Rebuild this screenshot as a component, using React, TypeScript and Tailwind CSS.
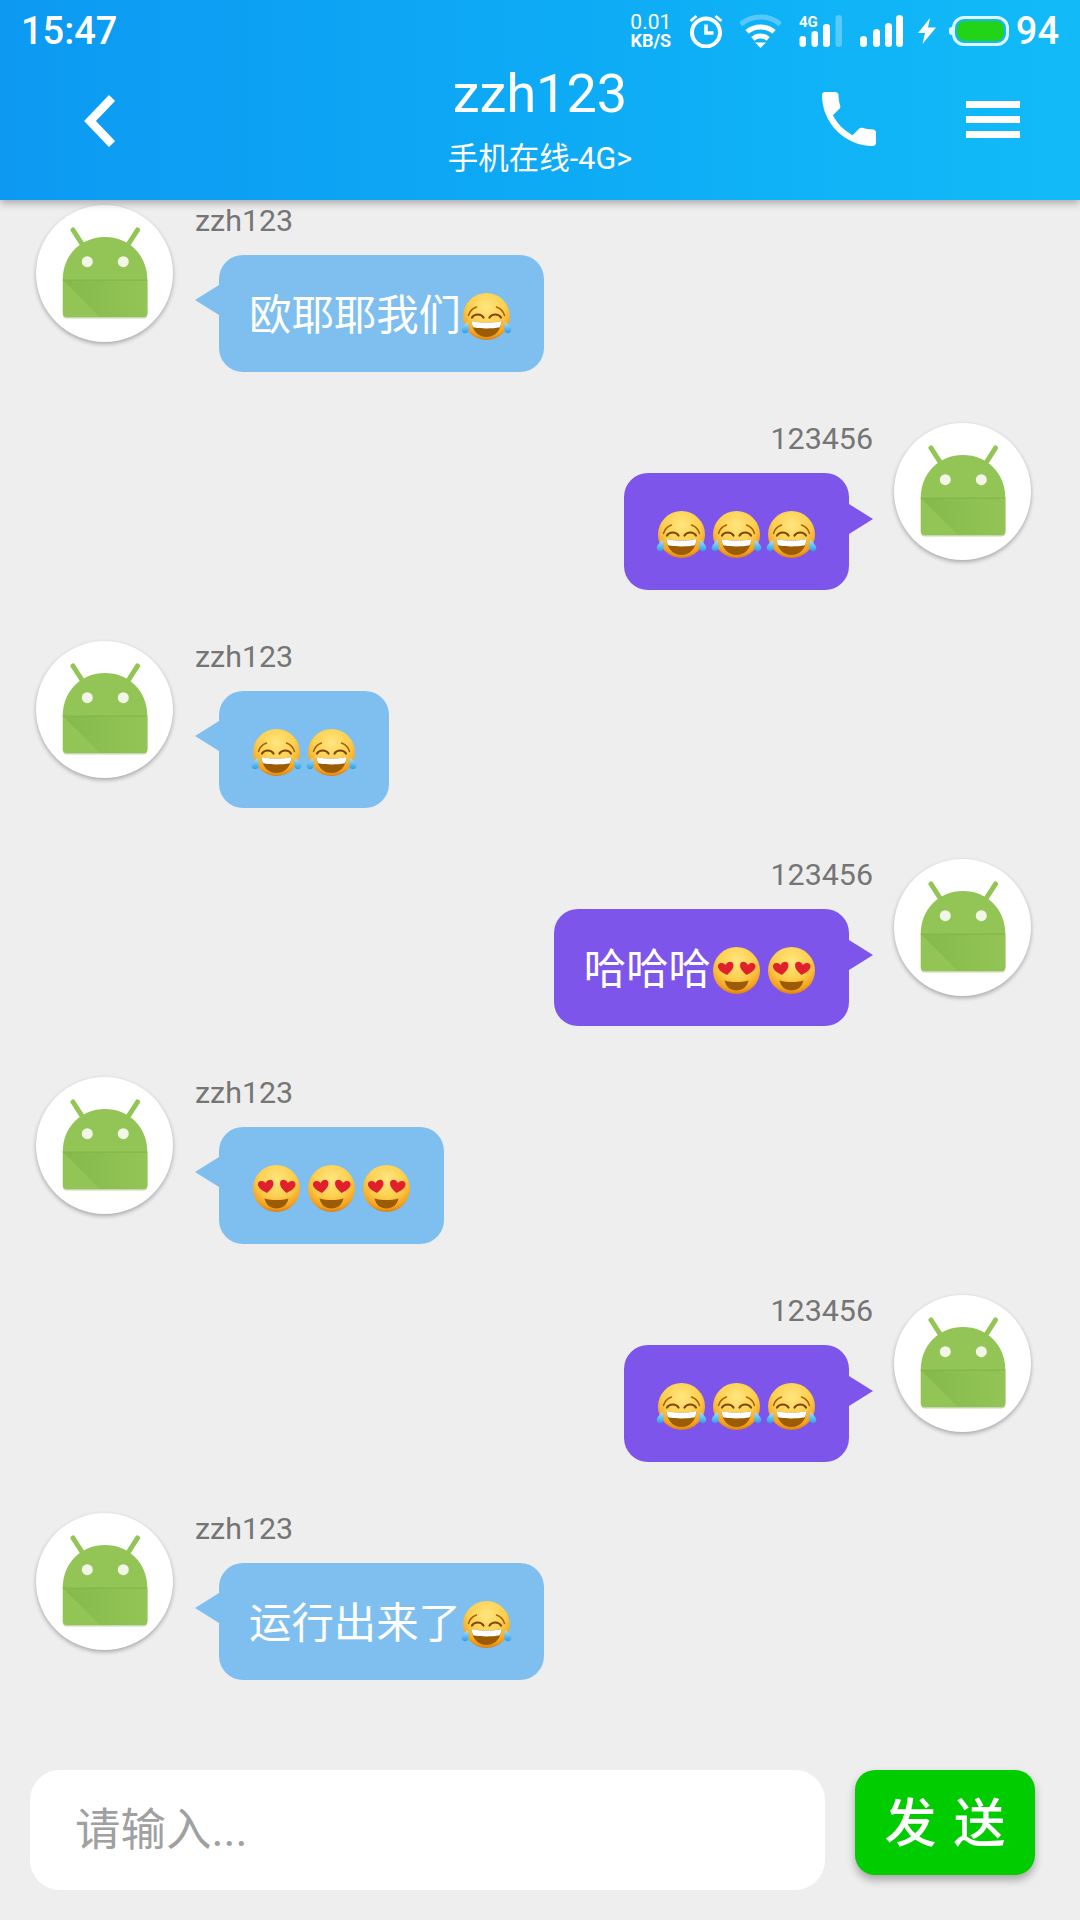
type Emoji = "joy" | "love"

type Message = {
  from: "left" | "right"
  name: string
  text?: string
  emoji: Emoji[]
}

const messages: Message[] = [
  { from: "left", name: "zzh123", text: "欧耶耶我们", emoji: ["joy"] },
  { from: "right", name: "123456", emoji: ["joy", "joy", "joy"] },
  { from: "left", name: "zzh123", emoji: ["joy", "joy"] },
  { from: "right", name: "123456", text: "哈哈哈", emoji: ["love", "love"] },
  { from: "left", name: "zzh123", emoji: ["love", "love", "love"] },
  { from: "right", name: "123456", emoji: ["joy", "joy", "joy"] },
  { from: "left", name: "zzh123", text: "运行出来了", emoji: ["joy"] },
]

const Heart = ({ x, y, rotate }: { x: number; y: number; rotate: number }) => (
  <path
    transform={`translate(${x} ${y}) rotate(${rotate})`}
    d="M0 7C-3 4.800-7.800 2-7.800-2.300-7.800-6-2.800-7 0-3 2.800-7 7.800-6 7.800-2.300 7.800 2 3 4.800 0 7Z"
    fill="#e0202c"
  />
)

const FaceDefs = () => (
  <defs>
    <radialGradient id="face" cx="50%" cy="30%" r="70%">
      <stop offset="0%" stopColor="#ffe680" />
      <stop offset="55%" stopColor="#fdcf4e" />
      <stop offset="88%" stopColor="#f4a21f" />
      <stop offset="100%" stopColor="#d97f14" />
    </radialGradient>
    <linearGradient id="tear" x1="0" y1="0" x2="0" y2="1">
      <stop offset="0%" stopColor="#a6e3ff" />
      <stop offset="100%" stopColor="#2a9fe8" />
    </linearGradient>
  </defs>
)

const JoyEmoji = () => (
  <svg viewBox="0.500 0.500 51 51" className="h-[51px] w-[51px] shrink-0 overflow-visible">
    <FaceDefs />
    <circle cx="26" cy="26" r="23.500" fill="url(#face)" />
    <path d="M8 25C9 21 12 18 16 16.500M44 25C43 21 40 18 36 16.500" fill="none" stroke="#a5610f" strokeWidth="1.500" strokeLinecap="round" />
    <path d="M11.500 27C14 23 20.500 23 23 27M29 27C31.500 23 38 23 40.500 27" fill="none" stroke="#7d4508" strokeWidth="2.200" strokeLinecap="round" />
    <path d="M11 30.500C20 32.500 32 32.500 41 30.500 40.500 40 34.500 46.500 26 46.500 17.500 46.500 11.500 40 11 30.500Z" fill="#9c5c05" />
    <path d="M11 30.500C20 32.500 32 32.500 41 30.500 40.800 32.800 40.300 34.800 39.400 36.700 31.500 38.300 20.500 38.300 12.600 36.700 11.700 34.800 11.200 32.800 11 30.500Z" fill="#fff" />
    <path d="M7 31.500C5 33.500 1.200 36.500 1.200 39.500 1.200 42.300 4.500 43.500 6.800 42 9 40.500 8.500 35 7 31.500Z" fill="url(#tear)" />
    <path d="M45 31.500C47 33.500 50.800 36.500 50.800 39.500 50.800 42.300 47.500 43.500 45.200 42 43 40.500 43.500 35 45 31.500Z" fill="url(#tear)" />
  </svg>
)

const LoveEmoji = () => (
  <svg viewBox="0.500 0.500 51 51" className="h-[51px] w-[51px] shrink-0 overflow-visible">
    <FaceDefs />
    <circle cx="26" cy="26" r="23.500" fill="url(#face)" />
    <Heart x={15.500} y={23.500} rotate={-8} />
    <Heart x={37} y={23.500} rotate={8} />
    <path d="M14 36C21.500 38 30.500 38 38 36 36.500 42.500 32 46 26 46 20 46 15.500 42.500 14 36Z" fill="#9c5c05" />
  </svg>
)

const AndroidAvatar = () => (
  <div className="h-[137px] w-[137px] shrink-0 rounded-full bg-white shadow-[0_2px_4px_rgba(0,0,0,0.3)]">
    <svg viewBox="0 0 137 137" className="h-full w-full">
      <defs>
        <linearGradient id="fold" x1="0" y1="0" x2="1" y2="0">
          <stop offset="0%" stopColor="#85b94b" />
          <stop offset="100%" stopColor="#93c556" />
        </linearGradient>
      </defs>
      <path d="M37 25L46 39M101.500 25L92.500 39" stroke="#93c556" strokeWidth="5" strokeLinecap="round" />
      <path d="M27 77V110C27 112.500 28.500 113.500 30.500 113.500H107.500C109.500 113.500 111.300 112.500 111.300 110V77Z" fill="#7ea648" fillOpacity="0.45" />
      <path d="M26.700 75C26.700 50 45 32 69 32S111.300 50 111.300 75V108.500C111.300 110.500 109.500 112 107.500 112H30.500C28.500 112 26.700 110.500 26.700 108.500Z" fill="#93c556" />
      <path d="M26.700 75H111.300V108.500C111.300 110.500 109.500 112 107.500 112H64Z" fill="url(#fold)" />
      <rect x="26.700" y="74.500" width="84.600" height="1.200" fill="#83b549" />
      <circle cx="51.300" cy="56.700" r="5.500" fill="#f1f6e6" />
      <circle cx="87.300" cy="56.700" r="5.500" fill="#f1f6e6" />
    </svg>
  </div>
)

const ChatRow = ({ message }: { message: Message }) => {
  const isLeft = message.from === "left"
  return (
    <div className={`flex h-[218px] items-start gap-[22px] ${isLeft ? "pl-[36px]" : "flex-row-reverse pr-[49px]"}`}>
      <AndroidAvatar />
      <div className={`flex flex-col ${isLeft ? "items-start" : "items-end -mr-[1px]"}`}>
        <p className="h-[50px] text-[30.400px] leading-[31px] text-[#757575]">{message.name}</p>
        <div className={`flex items-start ${isLeft ? "" : "flex-row-reverse"}`}>
          {isLeft ? (
            <div className="mt-[30px] h-0 w-0 border-y-[15px] border-r-[24px] border-y-transparent border-r-[#7fbfef]" />
          ) : (
            <div className="mt-[31px] h-0 w-0 border-y-[15px] border-l-[24px] border-y-transparent border-l-[#7e55eb]" />
          )}
          <div
            className={`flex h-[117px] items-center rounded-[24px] px-[32px] pt-[5px] text-[42.400px] leading-none text-white ${
              isLeft ? "bg-[#7fbfef]" : "bg-[#7e55eb]"
            }`}
          >
            {message.text && <span className="-ml-[2px]">{message.text}</span>}
            <div className="flex gap-[4px]">
              {message.emoji.map((e, i) => (e === "joy" ? <JoyEmoji key={i} /> : <LoveEmoji key={i} />))}
            </div>
          </div>
        </div>
      </div>
    </div>
  )
}

const StatusBar = () => (
  <div className="flex h-[60px] items-center justify-between px-[21px] pt-[1px] text-white">
    <span className="text-[38px] leading-none font-medium">15:47</span>
    <div className="flex items-center">
      {/* network speed */}
      <div className="flex w-[42px] flex-col items-center pl-[2px]">
        <span className="text-[21px] leading-[20px]">0.01</span>
        <span className="text-[18px] leading-[18px] font-bold">KB/S</span>
      </div>
      {/* alarm */}
      <svg viewBox="0 0 34 34" className="ml-[18px] h-[34px] w-[34px]" fill="none" stroke="white">
        <circle cx="17" cy="18.500" r="14" strokeWidth="4" />
        <path d="M17 10.500V19H24.500" strokeWidth="3.500" />
        <path d="M1.500 7L7.500 2M32.500 7L26.500 2" strokeWidth="2.800" />
      </svg>
      {/* wifi */}
      <svg viewBox="0 0 41 34" className="ml-[17px] h-[34px] w-[41px]" fill="none" stroke="white">
        <path d="M0.600 10.300A31 31 0 0 1 40.400 10.300" strokeWidth="5" strokeOpacity="0.3" />
        <path d="M7 17.900A21 21 0 0 1 34 17.900" strokeWidth="5" />
        <path d="M12.800 24.800A12 12 0 0 1 28.200 24.800" strokeWidth="5" />
        <polygon points="20.500,34 15,28.500 26,28.500" fill="white" stroke="none" />
      </svg>
      {/* sim 1 */}
      <svg viewBox="0 0 43 32" className="ml-[18px] h-[32px] w-[43px]">
        <text x="0" y="12" fontSize="15" fontWeight="700" fill="white" fontFamily="Roboto">4G</text>
        <rect x="0.500" y="21" width="6.500" height="11" rx="3.200" fill="white" />
        <rect x="12.500" y="16" width="6.500" height="16" rx="3.200" fill="white" />
        <rect x="24" y="9" width="7" height="23" rx="3.200" fill="white" />
        <rect x="36.500" y="0" width="6.500" height="32" rx="3.200" fill="white" fillOpacity="0.3" />
      </svg>
      {/* sim 2 */}
      <svg viewBox="0 0 43 32" className="ml-[18px] h-[32px] w-[43px]">
        <rect x="0" y="21" width="7" height="11" rx="3.500" fill="white" />
        <rect x="13" y="14" width="7" height="18" rx="3.500" fill="white" />
        <rect x="25" y="8" width="7" height="24" rx="3.500" fill="white" />
        <rect x="36" y="0" width="7" height="32" rx="3.500" fill="white" />
      </svg>
      {/* charging */}
      <svg viewBox="0 0 18 26" className="ml-[15px] h-[26px] w-[18px]" fill="white">
        <polygon points="12,0 0,15 7,15 4.500,26 18,9.500 10,9.500" />
      </svg>
      {/* battery */}
      <div className="ml-[13px] flex items-center">
        <div className="h-[8px] w-[3px] rounded-l-full bg-white/90" />
        <div className="h-[30px] w-[57px] rounded-[12px] border-[3px] border-[#dff7ff] p-[2px]">
          <div className="h-full w-full rounded-[8px] bg-[#22d317]" />
        </div>
      </div>
      <span className="ml-[7px] text-[38px] leading-none font-medium">94</span>
    </div>
  </div>
)

const Toolbar = () => (
  <div className="grid h-[140px] grid-cols-[1fr_auto_1fr] text-white">
    <div className="pt-[35px] pl-[84px]">
      <svg viewBox="0 0 31 52" className="h-[52px] w-[31px]" fill="none" stroke="white" strokeWidth="8.500">
        <path d="M28 3L6 26L28 49" />
      </svg>
    </div>
    <div className="flex flex-col items-center">
      <p className="mt-[3px] h-[62px] text-[54px] leading-[62px]">zzh123</p>
      <p className="mt-[14px] text-[30.500px] leading-[40px]">手机在线-4G&gt;</p>
    </div>
    <div className="flex items-start justify-end pt-[32px] pr-[60px]">
      <svg viewBox="3 3 18 18" className="h-[54px] w-[54px]" fill="white">
        <path d="M6.620 10.790c1.440 2.830 3.760 5.140 6.590 6.590l2.200-2.200c.270-.270.670-.360 1.020-.240 1.120.370 2.330.570 3.570.570.550 0 1 .450 1 1V20c0 .550-.450 1-1 1-9.390 0-17-7.610-17-17 0-.550.450-1 1-1h3.500c.550 0 1 .450 1 1 0 1.250.200 2.450.570 3.570.110.350.030.740-.250 1.020l-2.200 2.200z" />
      </svg>
      <div className="ml-[90px] flex flex-col gap-[8px] pt-[9px]">
        <div className="h-[7px] w-[54px] bg-white" />
        <div className="h-[7px] w-[54px] bg-white" />
        <div className="h-[7px] w-[54px] bg-white" />
      </div>
    </div>
  </div>
)

export default function App() {
  return (
    <div className="flex h-[1920px] w-[1080px] flex-col overflow-hidden bg-[#eeeeee] font-[Roboto,'Noto_Sans_CJK_SC',sans-serif]">
      <header className="relative z-10 h-[200px] bg-gradient-to-r from-[#0d99f2] to-[#12bbf8] shadow-[0_3px_8px_rgba(0,0,0,0.3)]">
        <StatusBar />
        <Toolbar />
      </header>

      <main className="flex-1 overflow-hidden pt-[5px]">
        {messages.map((m, i) => (
          <ChatRow key={i} message={m} />
        ))}
      </main>

      <footer className="flex h-[150px] items-start pl-[30px]">
        <div className="flex h-[120px] w-[795px] items-center rounded-[30px] bg-white pt-[2px] pl-[45px] text-[45.500px] text-[#a0a0a0]">
          请输入...
        </div>
        <button className="ml-[30px] flex h-[105px] w-[180px] items-center justify-center rounded-[20px] bg-[#00cc00] pt-[4px] pl-[2px] text-[52px] leading-none font-medium tracking-[2px] text-white shadow-[0_5px_8px_rgba(0,0,0,0.3)]">
          发 送
        </button>
      </footer>
    </div>
  )
}
